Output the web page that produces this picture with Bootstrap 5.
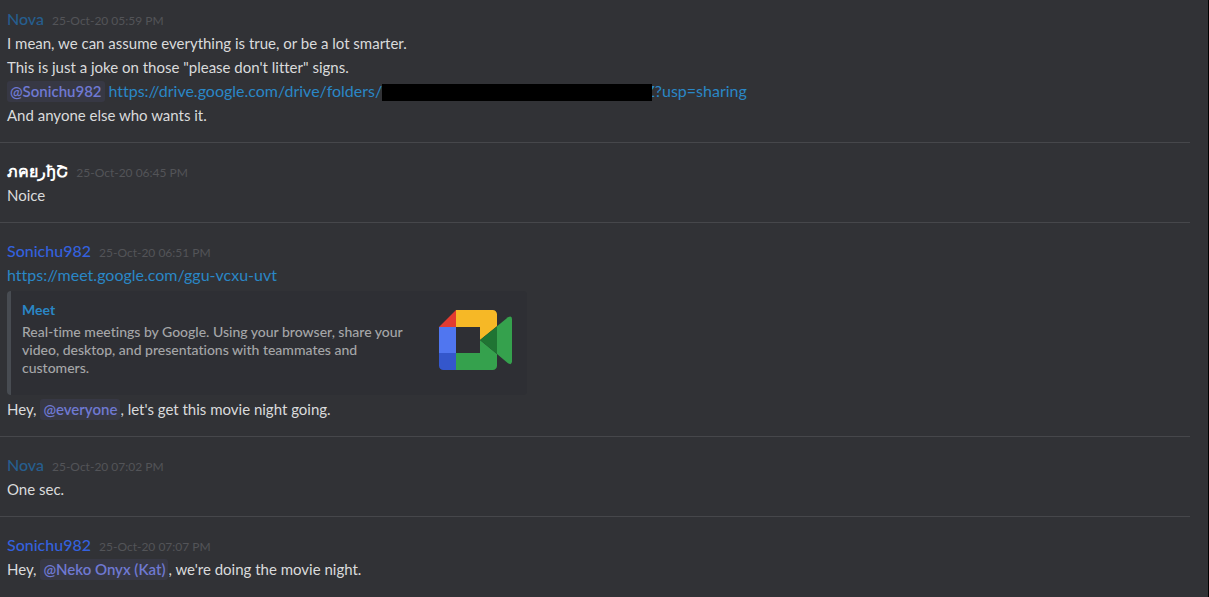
<!DOCTYPE html>
<html lang="en" data-bs-theme="dark">
<head>
<meta charset="utf-8">
<meta name="viewport" content="width=device-width, initial-scale=1">
<title>Chat log</title>
<link rel="stylesheet" href="https://cdn.jsdelivr.net/npm/bootstrap@5.3.0/dist/css/bootstrap.min.css">
<style>
body { background: #313236; color: #dadbdc; font: 15px/24px Lato, "Noto Sans", sans-serif; font-variant-ligatures: none; }
.chat-log { border-right: 1px solid #000; padding-right: 18px; }
.message { padding: 16px 7px 15px; border-top: 1px solid #46474b; }
.message:first-child { border-top: 0; padding-top: 7px; }
.author { font-size: 16px; line-height: 24px; font-weight: 500; }
.nova { color: #265e8e; }
.sonichu { color: #3461de; }
.stylized { color: #fff; font-family: "Noto Sans", sans-serif; font-weight: 600; }
.stamp { color: #535458; font-size: 12px; line-height: 16px; }
.chat-log a { color: #2a87c6; text-decoration: none; }
.chat-log a:hover { text-decoration: underline; }
.web-link { font-size: 16px; }
.mention { background: #373844; color: #6f79d2; font-weight: 600; line-height: 21px; padding: 0 3px; border-radius: 3px; }
.redacted { width: 270px; height: 17px; margin-right: -7px; background: #000; vertical-align: -4px; }
.embed { max-width: 520px; margin: 4px 0 2px; border-left: 4px solid #484c52; border-radius: 4px; background: #2e2f34; padding: 10px 14px 18px 11px; font-size: 14px; line-height: 18px; font-weight: 500; }
.embed-text { max-width: 400px; color: #a5a6a8; margin-top: 4px; }
.embed-logo { width: 74px; height: 60px; margin-top: 9px; }
</style>
</head>
<body>
<main class="chat-log min-vh-100">
  <article class="message">
    <header class="d-flex align-items-baseline gap-2"><span class="author nova">Nova</span><time class="stamp">25-Oct-20 05:59 PM</time></header>
    <div>I mean, we can assume everything is true, or be a lot smarter.</div>
    <div>This is just a joke on those "please don't litter" signs.</div>
    <div><span class="mention d-inline-block">@Sonichu982</span> <a class="web-link" href="#">https://drive.google.com/drive/folders/<span class="redacted d-inline-block position-relative z-1"></span>Z?usp=sharing</a></div>
    <div>And anyone else who wants it.</div>
  </article>
  <article class="message">
    <header class="d-flex align-items-baseline gap-2"><span class="author stylized">ภคยرђՇ</span><time class="stamp">25-Oct-20 06:45 PM</time></header>
    <div>Noice</div>
  </article>
  <article class="message">
    <header class="d-flex align-items-baseline gap-2"><span class="author sonichu">Sonichu982</span><time class="stamp">25-Oct-20 06:51 PM</time></header>
    <div><a class="web-link" href="#">https://meet.google.com/ggu-vcxu-uvt</a></div>
    <div class="embed d-flex justify-content-between align-items-start">
      <div>
        <a class="fw-bold" href="#">Meet</a>
        <div class="embed-text">Real-time meetings by Google. Using your browser, share your video, desktop, and presentations with teammates and customers.</div>
      </div>
      <svg class="embed-logo flex-shrink-0" viewBox="0 0 222 180" role="img" aria-label="Google Meet">
        <path fill="#e23b30" d="M51 0v51H0z"/>
        <path fill="#f6b826" d="M51 0h110a13 13 0 0 1 13 13v36l-51 41V51H51z"/>
        <path fill="#5076f0" d="M0 51h51v78H0z"/>
        <path fill="#3457cc" d="M0 129h51v51H13a13 13 0 0 1-13-13z"/>
        <path fill="#35a14d" d="M51 129h72V90l51 42v35a13 13 0 0 1-13 13H51z"/>
        <path fill="#35a14d" d="M174 49l33-27q12-7 12 5v127q0 13-12 6l-33-28z"/>
        <path fill="#1f7433" d="M123 90l51-41v83z"/>
      </svg>
    </div>
    <div>Hey, <span class="mention d-inline-block">@everyone</span>, let's get this movie night going.</div>
  </article>
  <article class="message">
    <header class="d-flex align-items-baseline gap-2"><span class="author nova">Nova</span><time class="stamp">25-Oct-20 07:02 PM</time></header>
    <div>One sec.</div>
  </article>
  <article class="message">
    <header class="d-flex align-items-baseline gap-2"><span class="author sonichu">Sonichu982</span><time class="stamp">25-Oct-20 07:07 PM</time></header>
    <div>Hey, <span class="mention d-inline-block">@Neko Onyx (Kat)</span>, we're doing the movie night.</div>
  </article>
</main>
<script src="https://cdn.jsdelivr.net/npm/bootstrap@5.3.0/dist/js/bootstrap.bundle.min.js"></script>
</body>
</html>
